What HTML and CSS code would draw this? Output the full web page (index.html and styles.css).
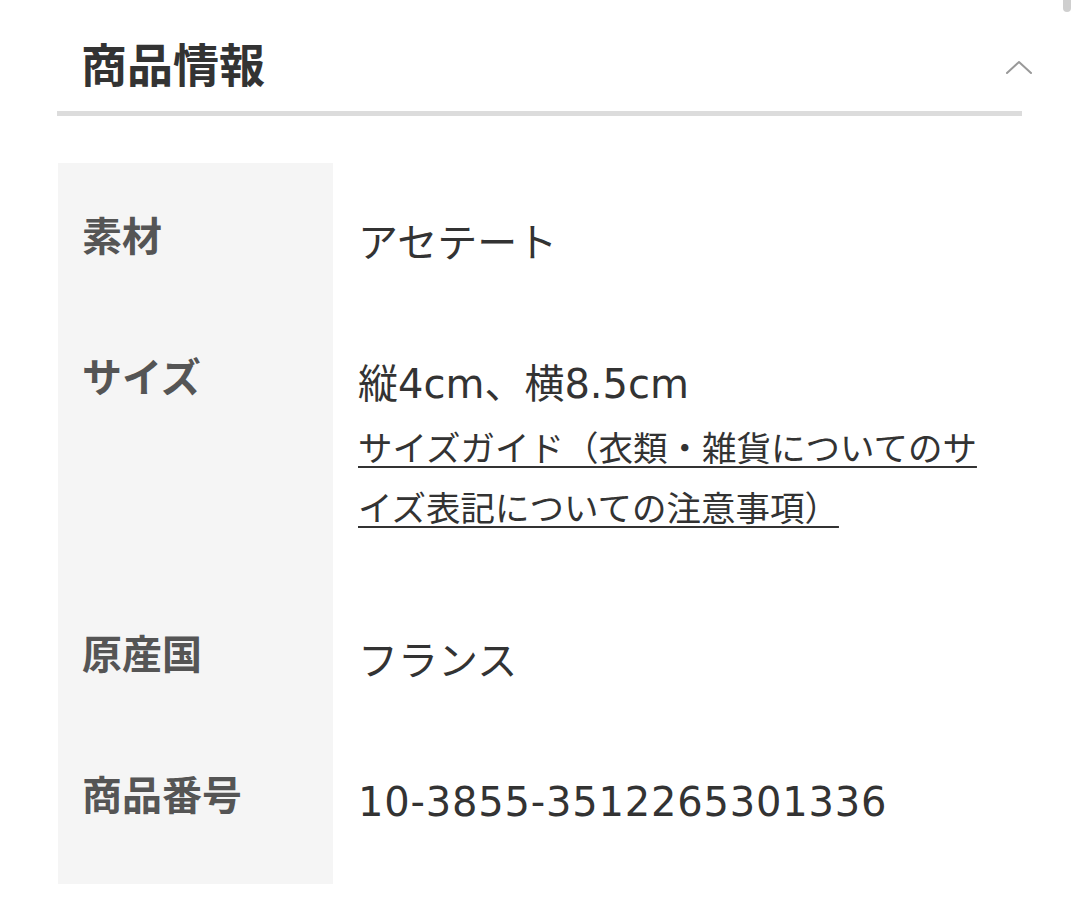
FILE: index.html
```html
<!DOCTYPE html>
<html lang="ja">
<head>
<meta charset="utf-8">
<title>商品情報</title>
<link rel="stylesheet" href="styles.css">
</head>
<body>
<div class="scroll-thumb"></div>
<section class="product-info">
  <header class="section-head">
    <h2 class="section-title">商品情報</h2>
    <svg class="chevron" width="28" height="16" viewBox="0 0 28 16" aria-hidden="true">
      <polyline points="2,14 14,3 26,14" fill="none" stroke="#999999" stroke-width="2" stroke-linecap="round" stroke-linejoin="round"/>
    </svg>
  </header>
  <dl class="spec">
    <dt class="spec-label">素材</dt>
    <dd class="spec-value">アセテート</dd>

    <dt class="spec-label">サイズ</dt>
    <dd class="spec-value">
      <div>縦4cm、横8.5cm</div>
      <div class="guide"><a class="guide-link" href="#">サイズガイド（衣類・雑貨についてのサイズ表記についての注意事項）</a></div>
    </dd>

    <dt class="spec-label">原産国</dt>
    <dd class="spec-value">フランス</dd>

    <dt class="spec-label last">商品番号</dt>
    <dd class="spec-value last number">10-3855-3512265301336</dd>
  </dl>
</section>
</body>
</html>
```

FILE: styles.css
```css
html, body {
  margin: 0;
  padding: 0;
  background: #ffffff;
}

body {
  font-family: "Noto Sans CJK JP", "Noto Sans", sans-serif;
  color: #333333;
  width: 1080px;
  height: 912px;
  overflow: hidden;
  position: relative;
}

.scroll-thumb {
  position: absolute;
  top: -4px;
  left: 1063px;
  width: 8px;
  height: 16px;
  border-radius: 4px;
  background: #cfcfcf;
}

.product-info {
  margin-left: 57px;
  width: 965px;
}

.section-head {
  display: flex;
  align-items: center;
  justify-content: space-between;
  padding: 40px 0 26px;
  border-bottom: 5px solid #dcdcdc;
}

.section-title {
  margin: 0;
  padding-left: 24px;
  font-size: 46px;
  line-height: 45px;
  font-weight: 700;
  color: #333333;
}

.chevron {
  margin-right: -11px;
  margin-top: 8px;
}

.spec {
  display: grid;
  grid-template-columns: 275px 1fr;
  margin: 47px 0 0 1px;
}

.spec-label {
  margin: 0;
  background: #f5f5f5;
  padding: 50px 24px 31px;
  font-size: 40px;
  line-height: 42px;
  font-weight: 700;
  color: #555555;
}

.spec-value {
  margin: 0;
  padding: 50px 25px 31px;
  font-family: "DejaVu Sans", "Noto Sans CJK JP", sans-serif;
  font-size: 40px;
  line-height: 60px;
  font-weight: 400;
  color: #333333;
}

.spec-value.number {
  letter-spacing: 0.8px;
}

.spec-label.last,
.spec-value.last {
  padding-bottom: 52px;
}

.guide {
  margin: 2px 0 14px;
  font-family: "Noto Sans CJK JP", sans-serif;
  font-size: 34.5px;
  line-height: 60px;
}

.guide-link {
  color: #333333;
  text-decoration: underline;
  text-decoration-thickness: 2px;
  text-underline-offset: 5px;
}
```
